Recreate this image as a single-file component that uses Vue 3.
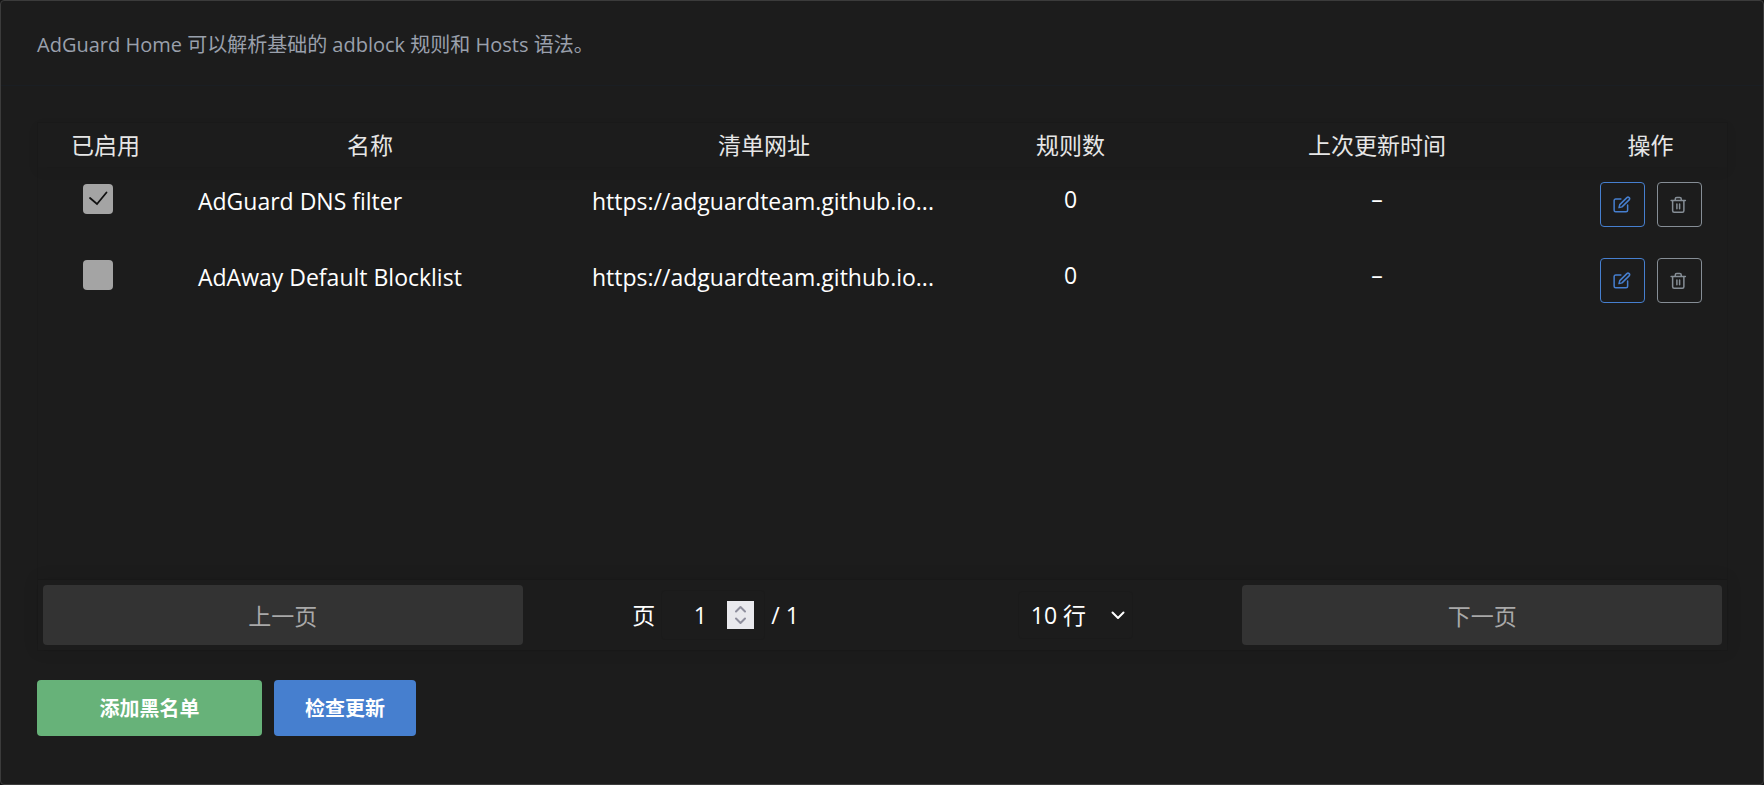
<template>
    <div class="card">
        <p class="subtitle">AdGuard Home 可以解析基础的 adblock 规则和 Hosts 语法。</p>
        <div class="card-body">
            <div class="filters">
                <div class="table-wrap">
                    <table>
                        <colgroup>
                            <col class="col-enabled" />
                            <col />
                            <col />
                            <col class="col-rules" />
                            <col />
                            <col class="col-actions" />
                        </colgroup>
                        <thead>
                            <tr>
                                <th v-for="title in columns" :key="title">{{ title }}</th>
                            </tr>
                        </thead>
                        <tbody>
                            <tr v-for="filter in filters" :key="filter.name">
                                <td class="enabled">
                                    <input type="checkbox" v-model="filter.enabled" :aria-label="filter.name" />
                                </td>
                                <td class="text">{{ filter.name }}</td>
                                <td class="text">{{ filter.url }}</td>
                                <td class="value">{{ filter.rules }}</td>
                                <td class="value">{{ filter.updated }}</td>
                                <td class="actions">
                                    <div class="action-buttons">
                                        <button type="button" class="icon-btn edit" aria-label="编辑">
                                            <svg viewBox="0 0 24 24">
                                                <path d="M10.500 4H3.500a2 2 0 0 0-2 2v13a2 2 0 0 0 2 2h14a2 2 0 0 0 2-2v-7" />
                                                <path d="M18.500 2.200a2.100 2.100 0 0 1 3 3L12 14.500l-4 1 1-4z" />
                                            </svg>
                                        </button>
                                        <button type="button" class="icon-btn delete" aria-label="删除">
                                            <svg viewBox="0 0 24 24">
                                                <path d="M1.500 6h19M18.500 6v13.500a2 2 0 0 1-2 2h-11a2 2 0 0 1-2-2V6M7 6V4a2 2 0 0 1 2-2h4a2 2 0 0 1 2 2v2M9.200 10.500v6.500M12.800 10.500v6.500" />
                                            </svg>
                                        </button>
                                    </div>
                                </td>
                            </tr>
                        </tbody>
                    </table>
                </div>
                <div class="pagination">
                    <button type="button" class="page-btn" disabled>上一页</button>
                    <div class="center">
                        <label class="page-info">
                            页
                            <span class="page-jump">
                                <input type="number" v-model="page" min="1" max="1" />
                                <svg class="spinner" viewBox="0 0 27 28" aria-hidden="true">
                                    <path d="M9 10.500l4.500-4.500 4.500 4.500M9 17.500l4.500 4.500 4.500-4.500" />
                                </svg>
                            </span>
                            / 1
                        </label>
                        <span class="page-size">
                            <select v-model="pageSize" aria-label="行">
                                <option v-for="size in sizes" :key="size" :value="size">{{ size }} 行</option>
                            </select>
                            <svg class="chevron" viewBox="0 0 14 10" aria-hidden="true">
                                <path d="M1.500 2.500l5.500 5.500 5.500-5.500" />
                            </svg>
                        </span>
                    </div>
                    <button type="button" class="page-btn" disabled>下一页</button>
                </div>
            </div>
            <div class="buttons">
                <button type="button" class="btn add">添加黑名单</button>
                <button type="button" class="btn refresh">检查更新</button>
            </div>
        </div>
    </div>
</template>

<script setup>
import { ref } from 'vue';

const columns = ['已启用', '名称', '清单网址', '规则数', '上次更新时间', '操作'];

const filters = ref([{
    name: 'AdGuard DNS filter',
    url: 'https://adguardteam.github.io...',
    rules: 0,
    updated: '–',
    enabled: true
}, {
    name: 'AdAway Default Blocklist',
    url: 'https://adguardteam.github.io...',
    rules: 0,
    updated: '–',
    enabled: false
}]);

const page = ref(1);
const pageSize = ref(10);
const sizes = [10, 20, 25, 50, 100];
</script>

<style>
body {
    margin: 0;
    background-color: #141414;
}
</style>

<style scoped>
.card {
    box-sizing: border-box;
    min-height: 100vh;
    border: 1px solid #3b3b3b;
    border-radius: 4px;
    background-color: #1c1c1c;
    color: #fff;
    font-family: "Open Sans", "Noto Sans CJK SC", sans-serif;
    font-size: 23px;
    line-height: 32px;
}

.subtitle {
    margin: 0;
    padding: 28px 36px 24px;
    border-bottom: 1px solid #1a1e23;
    color: #9aa0ac;
    font-size: 20px;
}

.card-body {
    padding: 36px 35px 36px 36px;
}

button, input, select {
    box-sizing: border-box;
    margin: 0;
    color: inherit;
    font: inherit;
}

svg {
    fill: none;
    stroke: currentColor;
    stroke-linecap: round;
    stroke-linejoin: round;
}

.filters {
    border: 1px solid #1a1a1a;
}

.table-wrap {
    min-height: 456px;
}

table {
    width: 100%;
    table-layout: fixed;
    border-collapse: collapse;
}

.col-enabled {
    width: 135px;
}

.col-rules {
    width: 219px;
}

.col-actions {
    width: 153px;
}

thead {
    box-shadow: 0 4px 12px rgba(0, 0, 0, 0.06);
}

th {
    padding: 6px 0;
    color: #e6e6e6;
    font-weight: 400;
}

td {
    height: 60px;
    padding: 15px 0 1px;
    vertical-align: top;
    text-align: center;
}

td.enabled {
    padding-right: 15px;
    line-height: 0;
}

td.value {
    padding-top: 16px;
    height: 59px;
}

td.text {
    padding-left: 25px;
    padding-top: 18px;
    height: 57px;
    text-align: left;
    white-space: nowrap;
}

.enabled input {
    appearance: none;
    width: 30px;
    height: 30px;
    margin-top: 2px;
    border-radius: 4px;
    background-color: #a4a4a4;
}

.enabled input:checked {
    background-image: url("data:image/svg+xml,%3Csvg xmlns='http://www.w3.org/2000/svg' viewBox='0 0 30 30'%3E%3Cpath d='M7 14l7 6L23.500 8.500' fill='none' stroke='%23111' stroke-width='1.800' stroke-linecap='round'/%3E%3C/svg%3E");
}

.action-buttons {
    display: flex;
    justify-content: center;
    gap: 12px;
}

.icon-btn {
    display: flex;
    align-items: center;
    justify-content: center;
    width: 45px;
    height: 45px;
    padding: 0;
    border: 1px solid;
    border-radius: 4px;
    background: none;
}

.icon-btn svg {
    width: 18px;
    height: 18px;
    stroke-width: 2;
}

.icon-btn.edit {
    color: #467fcf;
}

.icon-btn.delete {
    color: #868e96;
}

.pagination {
    display: flex;
    padding: 5px;
    border-top: 1px solid #181818;
    box-shadow: 0 0 15px rgba(0, 0, 0, 0.1);
}

.page-btn {
    flex: 1;
    height: 60px;
    padding: 2px 0 0;
    border: 0;
    border-radius: 4px;
    background-color: #333;
    color: #a9a9a9;
}

.center {
    flex: 1.5;
    display: flex;
    align-items: center;
    justify-content: space-around;
}

.page-info {
    display: flex;
    align-items: center;
    gap: 6px;
}

.page-jump {
    display: flex;
    align-items: center;
    width: 104px;
    height: 50px;
    box-sizing: border-box;
    padding-right: 10px;
    border: 1px solid #1a1a1a;
    border-radius: 4px;
}

.page-jump input {
    appearance: textfield;
    flex: 1;
    min-width: 0;
    padding: 0 0 0 26px;
    border: 0;
    background: none;
    text-align: center;
}

.spinner {
    width: 27px;
    height: 28px;
    background-color: #e9e9ed;
    color: #8f8f9d;
    stroke-width: 2;
}

.page-size {
    position: relative;
}

.page-size select {
    appearance: none;
    display: block;
    width: 115px;
    height: 48px;
    padding: 0 12px;
    border: 1px solid #1a1a1a;
    border-radius: 4px;
    background: none;
}

.chevron {
    position: absolute;
    top: 19px;
    right: 8px;
    width: 14px;
    height: 10px;
    stroke-width: 2;
    pointer-events: none;
}

.buttons {
    display: flex;
    gap: 12px;
    margin-top: 29px;
}

.btn {
    height: 56px;
    padding: 2px 31px 0;
    border: 0;
    border-radius: 4px;
    color: #fff;
    font-size: 20px;
    font-weight: 700;
}

.btn.add {
    min-width: 225px;
    background-color: #67b279;
}

.btn.refresh {
    background-color: #467fcf;
}
</style>
